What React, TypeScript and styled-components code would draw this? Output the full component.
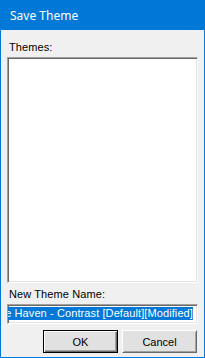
import styled, { createGlobalStyle } from "styled-components";

const GlobalStyle = createGlobalStyle`
  html, body {
    margin: 0;
    padding: 0;
    background: #f0f0f0;
  }
  * {
    box-sizing: border-box;
  }
`;

const Window = styled.div`
  width: 205px;
  height: 358px;
  display: flex;
  flex-direction: column;
  background: #f0f0f0;
  border: 1px solid #0078d7;
  border-top: none;
  font-family: "Liberation Sans", Arial, sans-serif;
  font-size: 11px;
  color: #000;
`;

const TitleBar = styled.div`
  height: 30px;
  margin: 0 -1px;
  padding-left: 10px;
  display: flex;
  align-items: center;
  background: #0078d7;
  color: #fff;
  font-family: "Noto Sans", "Open Sans", sans-serif;
  font-size: 12px;
`;

const Body = styled.div`
  flex: 1;
  display: flex;
  flex-direction: column;
  padding: 11px 6px 0 6px;
`;

const Label = styled.div<{ $top?: number }>`
  line-height: 13px;
  height: 13px;
  padding-left: 2px;
  letter-spacing: 0.1px;
  margin-top: ${({ $top }) => $top ?? 0}px;
  margin-bottom: 3px;
`;

const Sunken = styled.div`
  background: #fff;
  border: 1px solid;
  border-color: #a0a0a0 #fff #fff #a0a0a0;
  box-shadow: inset 1px 1px 0 #696969, inset -1px -1px 0 #e3e3e3;
`;

const ListBox = styled(Sunken)`
  height: 226px;
`;

const TextBox = styled(Sunken)`
  height: 20px;
  padding: 2px 4px 0 3px;
  display: flex;
  justify-content: flex-end;
  overflow: hidden;
  white-space: nowrap;
  letter-spacing: 0.1px;
`;

const Selected = styled.span`
  background: #0078d7;
  color: #fff;
  line-height: 13px;
  height: 13px;
`;

const Caret = styled.span`
  display: inline-block;
  width: 1px;
  height: 13px;
  background: #000;
`;

const ButtonRow = styled.div`
  display: flex;
  justify-content: flex-end;
  gap: 4px;
  margin-top: 6px;
  padding-right: 1px;
`;

const Button = styled.div<{ $default?: boolean }>`
  width: 75px;
  height: 23px;
  display: flex;
  align-items: center;
  justify-content: center;
  background: #e1e1e1;
  border: 1px solid;
  border-color: ${({ $default }) =>
    $default ? "#000" : "#fff #696969 #696969 #fff"};
  box-shadow: ${({ $default }) =>
    $default
      ? "inset 1px 1px 0 #fff, inset -1px -1px 0 #696969, inset -2px -2px 0 #a0a0a0"
      : "inset 1px 1px 0 #e3e3e3, inset -1px -1px 0 #a0a0a0"};
  font-size: 11px;
`;

export default function App() {
  return (
    <>
      <GlobalStyle />
      <Window>
        <TitleBar>Save Theme</TitleBar>
        <Body>
          <Label>Themes:</Label>
          <ListBox />
          <Label $top={5}>New Theme Name:</Label>
          <TextBox>
            <Selected>Blue Haven - Contrast [Default][Modified]</Selected>
            <Caret />
          </TextBox>
          <ButtonRow>
            <Button $default>OK</Button>
            <Button>Cancel</Button>
          </ButtonRow>
        </Body>
      </Window>
    </>
  );
}
